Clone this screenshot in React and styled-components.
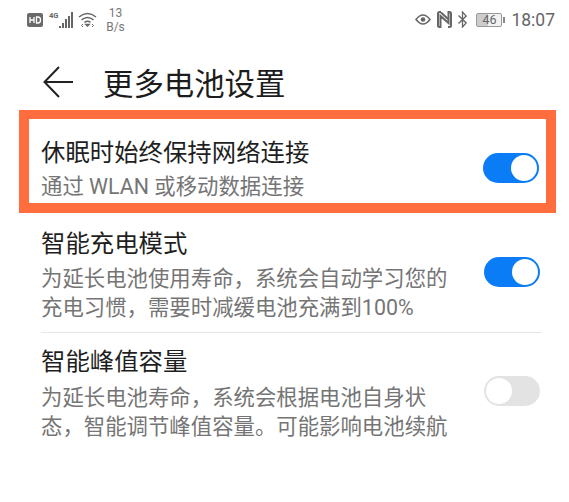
import styled, { createGlobalStyle } from "styled-components";

const GlobalStyle = createGlobalStyle`
  html, body {
    margin: 0;
    background: #fff;
  }
  body {
    font-family: "Roboto", "Noto Sans CJK SC", sans-serif;
  }
`;

const Page = styled.div`
  width: 569px;
  height: 502px;
  overflow: hidden;
  background: #fff;
`;

const StatusBar = styled.div`
  display: flex;
  justify-content: space-between;
  align-items: center;
  height: 36px;
  padding: 3px 14px 0 27px;
  box-sizing: border-box;
  color: #666;
`;

const StatusGroup = styled.div`
  display: flex;
  align-items: center;
  gap: ${({ $gap }) => $gap}px;
`;

const Speed = styled.div`
  width: 19px;
  margin-left: 4px;
  font-size: 12px;
  line-height: 14px;
  color: #777;
  text-align: center;
`;

const Battery = styled.div`
  position: relative;
  display: flex;
  align-items: center;
  justify-content: center;
  width: 26px;
  height: 14px;
  margin-left: 3px;
  box-sizing: border-box;
  border: 1px solid #999;
  border-radius: 2px;
  background: linear-gradient(90deg, #ccc 46%, #f2f2f2 46%);
  font-size: 12.5px;
  color: #666;
  &::after {
    content: "";
    position: absolute;
    right: -4px;
    top: 3px;
    width: 2px;
    height: 6px;
    background: #888;
  }
`;

const Clock = styled.div`
  margin-left: 3px;
  font-size: 17.5px;
  color: #666;
`;

const Header = styled.div`
  display: flex;
  align-items: center;
  gap: 30px;
  height: 74px;
  padding: 17px 0 0 43px;
  box-sizing: border-box;
`;

const Title = styled.h1`
  margin: 0;
  font-size: 30.4px;
  font-weight: 400;
  color: #1c1c1c;
`;

const Highlight = styled.div`
  display: flex;
  align-items: flex-start;
  justify-content: space-between;
  height: 103px;
  margin: 0 13px 0 19px;
  padding: 18px 7px 0 12px;
  box-sizing: border-box;
  border: 10px solid #ff6d3f;
  border-top-width: 9px;
`;

const Row = styled.div`
  display: flex;
  align-items: flex-start;
  justify-content: space-between;
  margin: 0 27px 0 41px;
  padding: ${({ $top }) => $top}px 2px ${({ $bottom }) => $bottom}px 0;
  border-bottom: ${({ $divider }) => ($divider ? "1px solid #e6e6e6" : "none")};
`;

const RowText = styled.div`
  display: flex;
  flex-direction: column;
`;

const RowTitle = styled.div`
  font-size: 24.4px;
  line-height: 32px;
  color: #1f1f1f;
`;

const RowSub = styled.div`
  margin-top: ${({ $mt }) => $mt}px;
  font-size: 21.4px;
  line-height: 29px;
  color: #757575;
  white-space: pre-line;
`;

const Toggle = styled.div`
  position: relative;
  flex: none;
  width: 56px;
  height: 30px;
  margin-top: ${({ $mt }) => $mt}px;
  border-radius: 15px;
  background: ${({ $on }) => ($on ? "#0a7cf5" : "#e3e3e3")};
  &::after {
    content: "";
    position: absolute;
    top: 2px;
    left: ${({ $on }) => ($on ? "28px" : "2px")};
    width: 26px;
    height: 26px;
    border-radius: 50%;
    background: #fff;
  }
`;

function BackArrow() {
  return (
    <svg width="30" height="32" viewBox="0 0 30 32" fill="none" stroke="#222" strokeWidth="2">
      <path d="M16 1 L1.5 16 L16 31" />
      <path d="M1.5 16 H30" />
    </svg>
  );
}

function HdIcon() {
  return (
    <svg width="16" height="14" viewBox="0 0 16 14">
      <rect width="16" height="14" rx="2" fill="#6a6a6a" />
      <path d="M3 4 V10 M7 4 V10 M3 7 H7" stroke="#fff" strokeWidth="1.3" fill="none" />
      <path d="M9.5 4 V10 H11 Q13.5 10 13.5 7 Q13.5 4 11 4 Z" stroke="#fff" strokeWidth="1.3" fill="none" />
    </svg>
  );
}

function SignalIcon() {
  return (
    <svg width="25" height="18" viewBox="0 0 25 18" fill="#666">
      <text x="1" y="7" fontSize="7.5" fontFamily="Roboto, sans-serif" fontWeight="700">4G</text>
      <rect x="11" y="15" width="2" height="2" />
      <rect x="14" y="12" width="2" height="5" />
      <rect x="17" y="8" width="2" height="9" />
      <rect x="20" y="5" width="2" height="12" />
      <rect x="23" y="1" width="2" height="16" />
    </svg>
  );
}

function WifiIcon() {
  return (
    <svg width="19" height="15" viewBox="0 0 19 15" fill="none" stroke="#666" strokeWidth="1.5">
      <path d="M1 5 Q9.5 -2 18 5" />
      <path d="M3.5 7.8 Q9.5 3 15.5 7.8" />
      <path d="M6.5 10.3 Q9.5 8 12.5 10.3" />
      <path d="M8 12.5 L9.5 14 L11 12.5 Z" fill="#666" />
      <path d="M5 12 L3.5 13.5 L5 15 M14 12 L15.5 13.5 L14 15" strokeWidth="1" />
    </svg>
  );
}

function EyeIcon() {
  return (
    <svg width="16" height="13" viewBox="0 0 16 13" fill="none" stroke="#666" strokeWidth="1.5">
      <path d="M1 6.5 Q8 -2.5 15 6.5 Q8 15.5 1 6.5 Z" />
      <circle cx="8" cy="6.5" r="2.3" fill="#666" stroke="none" />
    </svg>
  );
}

function NfcIcon() {
  return (
    <svg width="15" height="17" viewBox="0 0 15 17" fill="none" stroke="#666">
      <path d="M4 1 H2.5 Q1 1 1 2.5 V14.5 Q1 16 2.5 16 H3.5 V5 L11.5 12 V1 H12.5 Q14 1 14 2.5 V14.5 Q14 16 12.5 16 H11" strokeWidth="2" />
      <path d="M4 1.5 L11 8" strokeWidth="2" />
    </svg>
  );
}

function BluetoothIcon() {
  return (
    <svg width="9" height="17" viewBox="0 0 9 17" fill="none" stroke="#666" strokeWidth="1.3">
      <path d="M0.5 4.5 L8.2 12 L4.5 16 V1 L8.2 5 L0.5 12.5" />
    </svg>
  );
}

export default function App() {
  return (
    <Page>
      <GlobalStyle />
      <StatusBar>
        <StatusGroup $gap={5}>
          <HdIcon />
          <SignalIcon />
          <WifiIcon />
          <Speed>
            13
            <br />
            B/s
          </Speed>
        </StatusGroup>
        <StatusGroup $gap={6}>
          <EyeIcon />
          <NfcIcon />
          <BluetoothIcon />
          <Battery>46</Battery>
          <Clock>18:07</Clock>
        </StatusGroup>
      </StatusBar>
      <Header>
        <BackArrow />
        <Title>更多电池设置</Title>
      </Header>
      <Highlight>
        <RowText>
          <RowTitle>休眠时始终保持网络连接</RowTitle>
          <RowSub $mt={3}>通过 WLAN 或移动数据连接</RowSub>
        </RowText>
        <Toggle $on $mt={16} />
      </Highlight>
      <Row $top={15} $bottom={10} $divider>
        <RowText>
          <RowTitle>智能充电模式</RowTitle>
          <RowSub $mt={4}>{"为延长电池使用寿命，系统会自动学习您的\n充电习惯，需要时减缓电池充满到100%"}</RowSub>
        </RowText>
        <Toggle $on $mt={29} />
      </Row>
      <Row $top={13} $bottom={0}>
        <RowText>
          <RowTitle>智能峰值容量</RowTitle>
          <RowSub $mt={5}>{"为延长电池寿命，系统会根据电池自身状\n态，智能调节峰值容量。可能影响电池续航"}</RowSub>
        </RowText>
        <Toggle $mt={30} />
      </Row>
    </Page>
  );
}
